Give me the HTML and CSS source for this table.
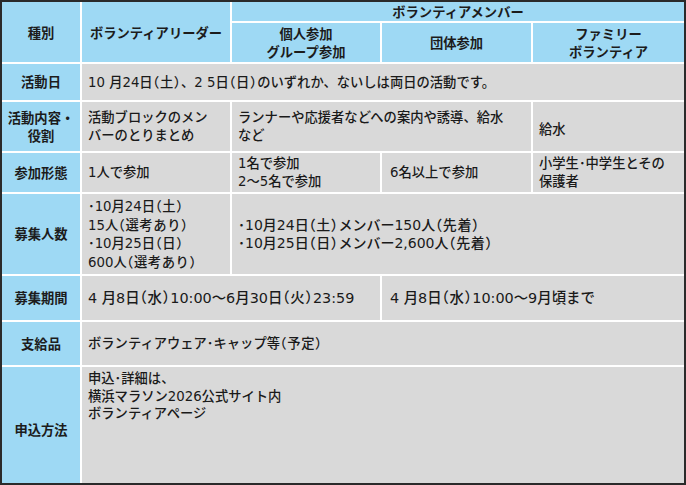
FILE: index.html
```html
<!DOCTYPE html>
<html lang="ja">
<head>
<meta charset="utf-8">
<link rel="stylesheet" href="styles.css">
</head>
<body>
<div class="frame">
<table class="grid">
<colgroup>
<col class="c0"><col class="c1"><col class="c2"><col class="c3"><col class="c4">
</colgroup>
<tr class="r-h1">
<th class="hd" rowspan="2">種別</th>
<th class="hd" rowspan="2">ボランティアリーダー</th>
<th class="hd" colspan="3">ボランティアメンバー</th>
</tr>
<tr class="r-h2">
<th class="hd">個人参加<br>グループ参加</th>
<th class="hd">団体参加</th>
<th class="hd">ファミリー<br>ボランティア</th>
</tr>
<tr class="r-date">
<th class="lb">活動日</th>
<td colspan="4">10 月24日<span class="pa">（土）</span>、2 5日<span class="pa">（日）</span>のいずれか、ないしは両日の活動です。</td>
</tr>
<tr class="r-role">
<th class="lb">活動内容・<br>役割</th>
<td>活動ブロックのメン<br>バーのとりまとめ</td>
<td colspan="2">ランナーや応援者などへの案内や誘導、給水<br>など</td>
<td class="low">給水</td>
</tr>
<tr class="r-form">
<th class="lb">参加形態</th>
<td>1人で参加</td>
<td>1名で参加<br>2〜5名で参加</td>
<td class="pad8">6名以上で参加</td>
<td>小学生･中学生とその<br>保護者</td>
</tr>
<tr class="r-num">
<th class="lb">募集人数</th>
<td>･10月24日<span class="pa">（土）</span><br>15人<span class="pa">（選考あり）</span><br>･10月25日<span class="pa">（日）</span><br>600人<span class="pa">（選考あり）</span></td>
<td colspan="3" class="big">･10月24日<span class="pa">（土）</span>メンバー150人<span class="pa">（先着）</span><br>･10月25日<span class="pa">（日）</span>メンバー2,600人<span class="pa">（先着）</span></td>
</tr>
<tr class="r-period">
<th class="lb">募集期間</th>
<td colspan="2" class="bigger">4 月8日<span class="pa">（水）</span>10:00〜6月30日<span class="pa">（火）</span>23:59</td>
<td colspan="2" class="pad8 bigger">4 月8日<span class="pa">（水）</span>10:00〜9月頃まで</td>
</tr>
<tr class="r-item">
<th class="lb">支給品</th>
<td colspan="4">ボランティアウェア･キャップ等<span class="pa">（予定）</span></td>
</tr>
<tr class="r-apply">
<th class="lb">申込方法</th>
<td colspan="4" class="top">申込･詳細は、<br>横浜マラソン2026公式サイト内<br>ボランティアページ</td>
</tr>
</table>
</div>
</body>
</html>
```
FILE: styles.css
```css
html, body {
  margin: 0;
  padding: 0;
  background: #ffffff;
}
.frame {
  width: 686px;
  height: 485px;
  box-sizing: border-box;
  border: 2px solid #2a2a2a;
  overflow: hidden;
  background: #ffffff;
}
.grid {
  margin: -2px;
  width: 686px;
  table-layout: fixed;
  border-collapse: separate;
  border-spacing: 2px;
  font-family: "DejaVu Sans", "Noto Sans CJK JP", sans-serif;
  font-size: 13.3px;
  line-height: 17.5px;
  color: #1a1a1a;
}
.c0 { width: 78px; }
.c1 { width: 148px; }
.c2 { width: 148px; }
.c3 { width: 149px; }
.c4 { width: 151px; }
th, td {
  padding: 0 6px;
  vertical-align: middle;
  overflow: hidden;
}
th {
  font-weight: 700;
  font-family: "Noto Sans CJK JP", sans-serif;
  color: #1c1c1c;
}
.hd, .lb {
  background: #9ed9f4;
  text-align: center;
}
.lb {
  padding: 0 2px;
}
td {
  background: #d9d9d9;
  text-align: left;
  font-weight: 500;
}
.pa {
  font-family: "Noto Sans CJK JP", sans-serif;
  font-feature-settings: "halt";
  letter-spacing: 0.6px;
}
.big { font-size: 14px; }
.bigger { font-size: 14.4px; }
.pad8 { padding-left: 8px; }
.low { padding-top: 6px; }
.top { vertical-align: top; padding-top: 3px; }
.r-h1 > * { height: 19px; }
.r-h2 > * { height: 39px; }
.r-date > * { height: 36px; }
.r-role > * { height: 43px; }
.r-form > * { height: 39px; }
.r-num > * { height: 80px; }
.r-period > * { height: 44px; }
.r-item > * { height: 43px; }
.r-apply > * { height: 122px; }
.r-h1 .hd { line-height: 17px; }
```
